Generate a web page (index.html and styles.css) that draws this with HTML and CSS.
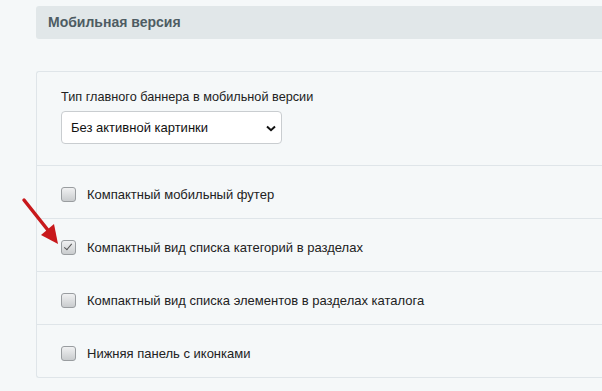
FILE: index.html
```html
<!DOCTYPE html>
<html lang="ru">
<head>
    <meta charset="UTF-8">
    <meta name="viewport" content="width=device-width, initial-scale=1.0">
    <title>Мобильная версия</title>
    <link rel="stylesheet" href="styles.css">
</head>
<body>
    <div class="page">
        <div class="section-title">Мобильная версия</div>

        <div class="panel">
            <div class="row row-select">
                <label for="bannerType">Тип главного баннера в мобильной версии</label>
                <div class="select-wrap">
                    <select id="bannerType" class="select">
                        <option selected>Без активной картинки</option>
                        <option>С активной картинкой</option>
                    </select>
                    <svg class="select-arrow" width="10" height="7" viewBox="0 0 10 7">
                        <path d="M1 1.5 L5 5.2 L9 1.5" fill="none" stroke="#111" stroke-width="2"/>
                    </svg>
                </div>
            </div>

            <label class="row row-check">
                <input type="checkbox" class="check">
                <span>Компактный мобильный футер</span>
            </label>

            <label class="row row-check">
                <input type="checkbox" class="check" checked>
                <span>Компактный вид списка категорий в разделах</span>
            </label>

            <label class="row row-check">
                <input type="checkbox" class="check">
                <span>Компактный вид списка элементов в разделах каталога</span>
            </label>

            <label class="row row-check">
                <input type="checkbox" class="check">
                <span>Нижняя панель с иконками</span>
            </label>
        </div>
    </div>

    <!-- pointer arrow drawn over the page -->
    <svg class="pointer" width="50" height="56" viewBox="0 0 50 56">
        <line x1="3" y1="3" x2="30" y2="37" stroke="#c8191c" stroke-width="3.5" stroke-linecap="round"/>
        <polygon points="37,47 20,38 33,27" fill="#c8191c"/>
    </svg>
</body>
</html>
```

FILE: styles.css
```css
body {
    margin: 0;
    background-color: #f5f8f9;
    font-family: "Liberation Sans", Arial, sans-serif;
    font-size: 13px;
    color: #222;
    overflow: hidden;
    position: relative;
}

.page {
    padding: 6px 0 0 36px;
    width: 620px;
}

.section-title {
    height: 33px;
    line-height: 33px;
    padding-left: 12px;
    background-color: #e1e7e9;
    border-radius: 3px 0 0 3px;
    color: #4e5c63;
    font-size: 14px;
    font-weight: bold;
}

.panel {
    margin-top: 32px;
    border: 1px solid #dfe5e9;
    border-right: none;
    border-radius: 3px 0 0 3px;
}

.row {
    border-top: 1px solid #dfe5e9;
    padding-left: 24px;
}

.row:first-child {
    border-top: none;
}

.row-select {
    padding-top: 18px;
    padding-bottom: 21px;
}

.row-select label {
    display: block;
    font-size: 12.7px;
    line-height: 15px;
    margin-bottom: 6px;
}

.select-wrap {
    position: relative;
    width: 221px;
}

.select {
    display: block;
    width: 221px;
    height: 33px;
    padding: 0 0 0 9px;
    border: 1px solid #c9cdd0;
    border-radius: 4px;
    background-color: #fff;
    font-family: "Liberation Sans", Arial, sans-serif;
    font-size: 13px;
    color: #111;
    appearance: none;
    -webkit-appearance: none;
}

.select-arrow {
    position: absolute;
    right: 6px;
    top: 14px;
    pointer-events: none;
}

.row-check {
    display: flex;
    align-items: center;
    box-sizing: border-box;
    height: 53px;
    padding-top: 5px;
    cursor: pointer;
}

.check {
    appearance: none;
    -webkit-appearance: none;
    margin: 0 11px 0 0;
    width: 15px;
    height: 15px;
    border: 1px solid #999da0;
    border-radius: 3px;
    background: linear-gradient(#f0f1f2, #c9ccce);
    position: relative;
    cursor: pointer;
}

.check:checked::after {
    content: "";
    position: absolute;
    left: 4px;
    top: 1px;
    width: 3px;
    height: 7px;
    border: solid #555;
    border-width: 0 1.5px 1.5px 0;
    transform: rotate(40deg);
}

.pointer {
    position: absolute;
    left: 21px;
    top: 197px;
}
```
